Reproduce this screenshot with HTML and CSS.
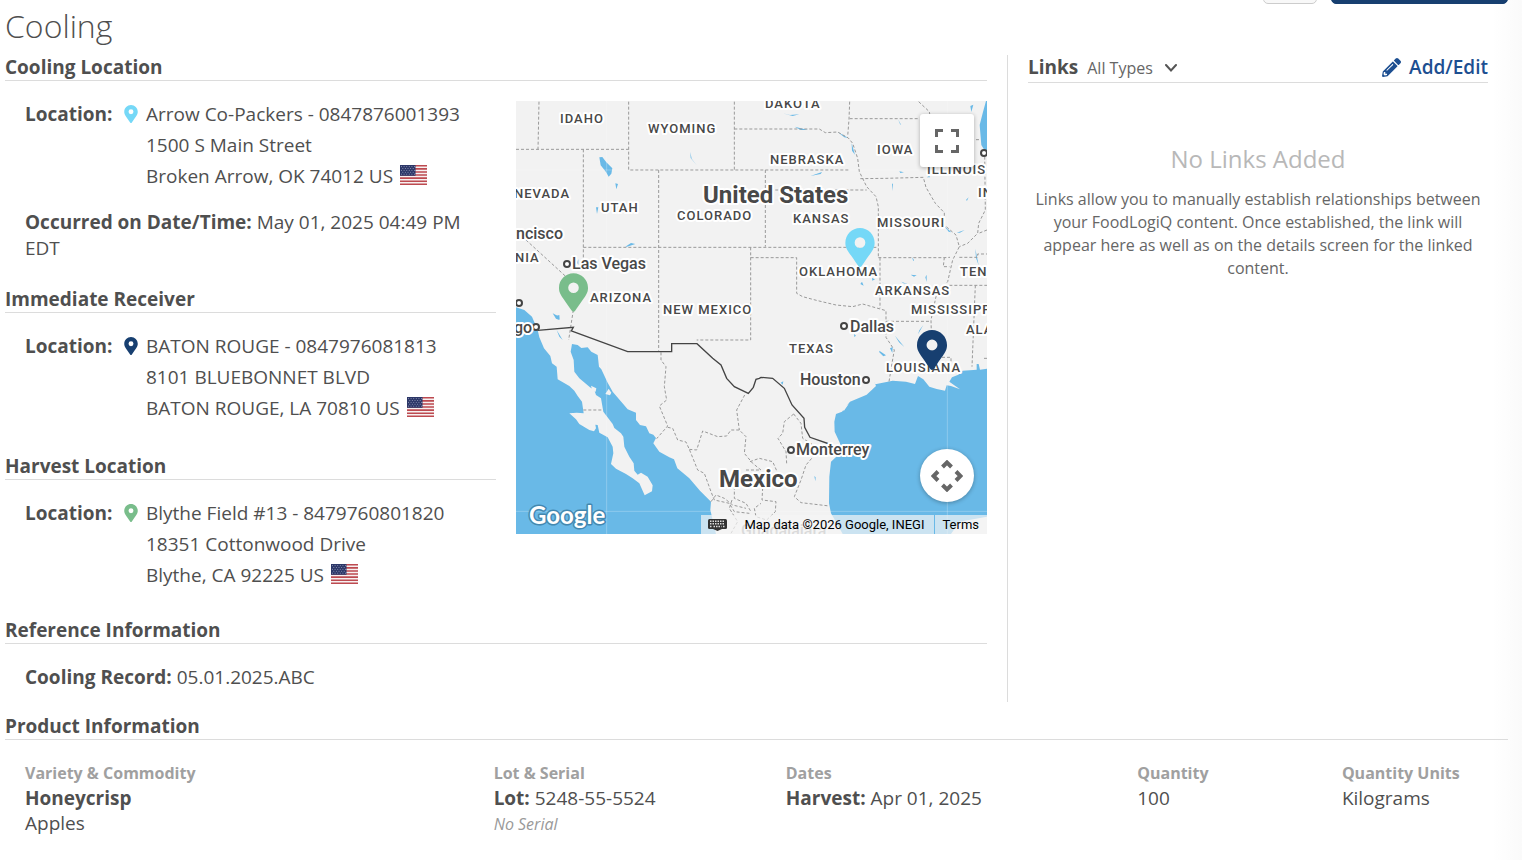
FILE: index.html
```html
<!DOCTYPE html>
<html lang="en">
<head>
<meta charset="utf-8">
<meta name="viewport" content="width=device-width, initial-scale=1">
<title>Cooling</title>
<link rel="stylesheet" href="styles.css">
</head>
<body>
<svg class="defs" aria-hidden="true">
  <symbol id="pin" viewBox="0 0 384 512"><path fill-rule="evenodd" d="M172.3 501.7C27 291 0 269.4 0 192 0 86 86 0 192 0s192 86 192 192c0 77.400-27 99-172.300 309.700-9.500 13.700-29.900 13.700-39.400 0zM192 262a70 70 0 1 0 0-140 70 70 0 0 0 0 140z"/></symbol>
  <symbol id="flag" viewBox="0 0 27 20">
    <rect width="27" height="20" fill="#f7f0f0"/>
    <path stroke="#bd4a50" stroke-width="1.600" d="M0 .8h27M0 3.900h27M0 7h27M0 10h27M0 13.100h27M0 16.200h27M0 19.200h27"/>
    <rect width="15.500" height="10.800" fill="#2c3768"/>
    <path stroke="#8d94b4" stroke-width=".9" stroke-dasharray="1 1.600" d="M1 1.600h14M2.300 3.500h12M1 5.400h14M2.300 7.300h12M1 9.200h14"/>
  </symbol>
</svg>

<div class="toolbar">
  <button class="btn" type="button" aria-label="More actions"></button>
  <button class="btn btn-primary" type="button" aria-label="Edit event"></button>
</div>

<main class="page">
  <h1 class="title">Cooling</h1>
  <div class="columns">
    <div class="details">
      <h2 class="heading">Cooling Location</h2>
      <div class="split">
        <div class="places">
          <section class="block">
            <div class="place">
              <strong class="label">Location:</strong>
              <svg class="pin sky"><use href="#pin"/></svg>
              <address class="address">Arrow Co-Packers - 0847876001393<br>1500 S Main Street<br>Broken Arrow, OK 74012 US <svg class="flag" role="img" aria-label="United States"><use href="#flag"/></svg></address>
            </div>
            <p class="occurred"><strong>Occurred on Date/Time:</strong> May 01, 2025 04:49 PM EDT</p>
          </section>
          <h2 class="heading">Immediate Receiver</h2>
          <section class="block">
            <div class="place">
              <strong class="label">Location:</strong>
              <svg class="pin navy"><use href="#pin"/></svg>
              <address class="address">BATON ROUGE - 0847976081813<br>8101 BLUEBONNET BLVD<br>BATON ROUGE, LA 70810 US <svg class="flag" role="img" aria-label="United States"><use href="#flag"/></svg></address>
            </div>
          </section>
          <h2 class="heading">Harvest Location</h2>
          <section class="block">
            <div class="place">
              <strong class="label">Location:</strong>
              <svg class="pin green"><use href="#pin"/></svg>
              <address class="address">Blythe Field #13 - 8479760801820<br>18351 Cottonwood Drive<br>Blythe, CA 92225 US <svg class="flag" role="img" aria-label="United States"><use href="#flag"/></svg></address>
            </div>
          </section>
        </div>
        <div class="map">
          <svg class="map-canvas" viewBox="0 0 471 433" preserveAspectRatio="xMidYMid slice">
            <g transform="translate(0 -1) scale(.33333)">
              <g class="water">
                <path d="M0 622 25 630 48 650 65 690 70 712 84 745 103 768 108 790 122 800 125 838 160 858 175 872 185 888 198 905 203 940 182 938 160 940 180 958 190 972 220 990 234 994 240 985 238 974 245 975 250 998 275 1012 290 1040 292 1060 285 1092 300 1106 330 1122 350 1135 370 1150 386 1186 408 1174 410 1156 395 1130 375 1118 365 1124 355 1112 353 1090 340 1070 325 1040 322 1010 315 1000 295 984 290 972 262 935 255 895 240 885 235 870 222 862 190 835 175 815 173 780 164 755 168 732 185 735 196 744 215 742 226 755 245 765 249 800 256 808 275 848 290 875 335 928 360 938 360 960 372 975 390 979 400 1000 412 1004 420 1014 412 1030 430 1055 460 1072 474 1078 484 1105 520 1135 552 1172 585 1205 583 1230 600 1302H0z"/>
                <path d="M1413 806 1392 809 1388 792 1382 792 1382 809 1340 812 1327 824 1308 832 1300 845 1332 868 1305 858 1292 856 1287 872 1262 867 1240 860 1222 838 1206 828 1197 852 1170 845 1130 842 1078 853 1071 838 1080 858 1052 884 1002 905 978 935 960 942 955 965 956 995 972 1030 972 1060 945 1085 940 1130 939 1210 945 1240 968 1280 980 1302H1305L1330 1265 1413 1250z"/>
                <path d="M1410 3 1400 40 1391 75 1396 135 1405 150 1413 150V3zM250 172l9-1 12 16 18 18-3 16-8 9-8-14-16-20zM298 250l8 2-5 16zM240 322l7 0-4 20zM328 440l17-11 13 3-25 8zM523 156l4 20 15 20-18-22zM800 40l22 5 28-2-20 5zM836 80l40 10-22 0zM965 96l32 18-12-2zM1007 130l10 34-9-12zM883 228l35-12-4 6zM1146 58l10 18-4-4zM1363 18l9-4-6 22zM1128 250l3 3-2 20zM1282 375l24 22-8-2zM1322 398l24-8-14 8zM1378 446l10 50-8-22zM1150 214l14 3-11 2zM1350 300l8-8-5 10zM1038 545l5 12-10-5zM1068 534l9 4-8 4zM1188 472l6 8-2 4zM1184 524l18 2-8 4zM1232 524l0 22-4-14zM1156 545l20 8-14-3zM1232 232l8-4 2 4zM110 640l20 10 0 10-10-4zM118 648l12-3 1 13zM122 690l18 30-10-10zM1090 752l20 14-8 3-12-12zM1122 745l8-4-1 18zM1137 707l28 34-16-14zM1222 675l-16 28 4-12zM1014 702l6 5-5 4zM895 1128l4 4-1 12zM794 848l8-4-2 10zM182 488l5-10 0 16z"/>
              </g>
              <path class="island" d="M225 857l16 8-2 10-10-3zM278 866l8 12-4 8-14-4zM976 928l22-16-14 20z"/>
              <path class="tiles" d="M272 3V1302M1294 3V1302M0 210H1413M0 1234H1413"/>
              <path class="state" d="M0 148H338M69 5 66 148M338 5V210H1000M655 5V210M655 87H910L928 98 965 96 997 114 1010 130 1025 175 1030 215 1052 260 1080 290 1087 320V473M202 148V480M202 442H1084M428 210V752M656 87M748 210V440M748 270H1052M704 442V720H542M704 473H842V580L860 590 905 602 960 615 1010 620 1040 612 1110 632V712L1135 750 1128 790 1119 845M1087 473H1285L1302 472M1092 473V625M1110 664H1240M1001 5 999 58 995 110M1001 56H1210M1033 236 1110 235 1222 232 1230 262 1258 310 1285 338 1285 375 1320 405 1330 440 1310 480 1295 545 1260 590 1245 660 1248 772M1208 5 1240 35 1244 60M1230 119H1391M1406 155 1408 330 1388 370 1385 400 1355 430 1330 440M1413 390 1388 400M1330 472H1385V462H1413M1285 472 1282 500 1300 500M1285 556H1413M1378 556 1368 800M1248 772H1305V790M1404 775H1413M30 420 150 530M172 630 158 720M202 930H262M435 757 435 780 450 800 445 860 452 900 430 918 455 978 422 1016M455 982 470 985 485 1020 510 1026 520 1048 545 1110 565 1120 585 1175 595 1200 640 1210 655 1235 700 1240M520 1048 542 1050 560 993 605 1010 632 1008 645 990 670 990 690 1010 685 1060 710 1090 735 1110H690M686 885 662 930 670 990M833 942 805 965 800 1000 786 1015 810 1055 812 1090M833 942 855 970 860 1015 892 1035 900 1060 870 1095 855 1140 835 1190 855 1208 940 1218M702 1085 730 1075 770 1085 790 1130 740 1165 738 1200 780 1205 778 1235 752 1260 720 1250 715 1225 735 1210M655 1160V1195L690 1210 705 1235M648 1200 640 1225 665 1265 645 1300M585 1205 600 1185 625 1195 650 1215 690 1225"/>
              <path class="country" d="M65 691 172 682 166 693 335 755H467V731H543L590 775 615 795 632 835 655 860 697 880 712 862 720 838 730 835 735 832 770 835 805 865 828 915 864 955 866 982 882 1012 940 1032"/>
            </g>
            <g class="cities">
              <circle cx="51" cy="163" r="3"/><circle cx="3" cy="202" r="3"/><circle cx="20" cy="226" r="3"/><circle cx="328" cy="225" r="3"/><circle cx="350" cy="279" r="3"/><circle cx="275" cy="349" r="3"/><circle cx="468" cy="52" r="3"/>
            </g>
            <g class="state-names">
              <text x="44" y="22">IDAHO</text><text x="132" y="32">WYOMING</text><text x="249" y="7">DAKOTA</text><text x="254" y="63">NEBRASKA</text><text x="361" y="53">IOWA</text><text x="411" y="73">ILLINOIS</text><text x="-2" y="97">NEVADA</text><text x="85" y="111">UTAH</text><text x="161" y="119">COLORADO</text><text x="277" y="122">KANSAS</text><text x="361" y="126">MISSOURI</text><text x="462" y="96">INDIANA</text><text x="-1" y="161">NIA</text><text x="74" y="201">ARIZONA</text><text x="147" y="213">NEW MEXICO</text><text x="283" y="175">OKLAHOMA</text><text x="359" y="194">ARKANSAS</text><text x="444" y="175">TENNESSEE</text><text x="395" y="213">MISSISSIPPI</text><text x="450" y="233">ALABAMA</text><text x="273" y="252">TEXAS</text><text x="370" y="271">LOUISIANA</text>
            </g>
            <g class="city-names">
              <text x="0" y="138">ncisco</text><text x="56" y="168">Las Vegas</text><text x="-2" y="232">go</text><text x="334" y="231">Dallas</text><text x="284" y="284">Houston</text><text x="280" y="354">Monterrey</text><text class="muted" x="225" y="435">Guadalajara</text>
            </g>
            <g class="country-names"><text x="187" y="102">United States</text><text x="203" y="386">Mexico</text></g>
            <text class="google" x="13" y="423">Google</text>
            <g class="markers">
              <circle cx="57" cy="187" r="5"/><circle cx="344" cy="142" r="5"/><circle cx="416" cy="244" r="5"/>
              <use class="green" href="#pin" x="43" y="172" width="29" height="39"/>
              <use class="sky" href="#pin" x="329" y="127" width="30" height="39"/>
              <use class="navy" href="#pin" x="401" y="229" width="30" height="40"/>
            </g>
          </svg>
          <button class="map-btn fullscreen" type="button" aria-label="Toggle fullscreen view"><svg viewBox="0 0 24 24" width="24" height="24"><path d="M0 0h8v3H3v5H0zM16 0h8v8h-3V3h-5zM0 16h3v5h5v3H0zM21 16h3v8h-8v-3h5z"/></svg></button>
          <button class="map-btn camera" type="button" aria-label="Map camera controls"><svg viewBox="0 0 32 32" width="32" height="32"><path class="arrows" d="M11.500 7 16 2.500 20.500 7M11.500 25l4.500 4.500 4.500-4.500M7 11.500 2.500 16 7 20.500M25 11.500l4.500 4.500-4.500 4.500"/></svg></button>
          <div class="credits">
            <button class="keys" type="button" aria-label="Keyboard shortcuts"><svg viewBox="0 0 19 12" width="19" height="12"><rect width="19" height="10" rx="1.500"/><path d="M5 10h9l-4.500 2z"/><path class="keycaps" d="M2 2.300h15M2 4.800h15M2 7.500h2M5.500 7.500h8M15 7.500h2"/></svg></button>
            <span class="credit">Map data ©2026 Google, INEGI</span>
            <a class="credit terms" href="#">Terms</a>
          </div>
        </div>
      </div>
      <h2 class="heading">Reference Information</h2>
      <p class="record"><strong>Cooling Record:</strong> 05.01.2025.ABC</p>
    </div>

    <aside class="links">
      <div class="links-head">
        <h2 class="links-title"><label for="types">Links</label></h2>
        <span class="picker">
          <select id="types" class="types"><option>All Types</option></select>
          <svg class="chevron" viewBox="0 0 12 8" width="12" height="8"><path d="M1 1l5 5.500L11 1"/></svg>
        </span>
        <a class="edit" href="#"><svg viewBox="0 0 512 512" width="19" height="19"><path d="M497.900 142.100l-46.100 46.100c-4.700 4.700-12.300 4.700-17 0l-111-111c-4.700-4.700-4.700-12.300 0-17l46.100-46.100c18.700-18.700 49.100-18.700 67.900 0l60.100 60.100c18.800 18.700 18.800 49.100 0 67.900zM284.200 99.800L21.600 362.400.4 483.900c-2.900 16.400 11.400 30.600 27.800 27.800l121.500-21.300 262.600-262.600c4.700-4.700 4.700-12.300 0-17l-111-111c-4.800-4.700-12.400-4.700-17.100 0zM124.100 339.900c-5.500-5.500-5.500-14.300 0-19.800l154-154c5.500-5.500 14.300-5.500 19.800 0s5.500 14.300 0 19.800l-154 154c-5.500 5.500-14.300 5.500-19.800 0zM88 424h48v36.300l-64.500 11.300-31.100-31.100L51.700 376H88v48z"/></svg>Add/Edit</a>
      </div>
      <h3 class="empty-title">No Links Added</h3>
      <p class="empty-text">Links allow you to manually establish relationships between your FoodLogiQ content. Once established, the link will appear here as well as on the details screen for the linked content.</p>
    </aside>
  </div>

  <h2 class="heading">Product Information</h2>
  <div class="product">
    <table class="items">
      <colgroup><col class="c-variety"><col class="c-lot"><col class="c-dates"><col class="c-qty"><col></colgroup>
      <thead><tr><th>Variety &amp; Commodity</th><th>Lot &amp; Serial</th><th>Dates</th><th>Quantity</th><th>Quantity Units</th></tr></thead>
      <tbody><tr>
        <td><strong>Honeycrisp</strong><br>Apples</td>
        <td><strong>Lot:</strong> 5248-55-5524<br><em class="none">No Serial</em></td>
        <td><strong>Harvest:</strong> Apr 01, 2025</td>
        <td>100</td>
        <td>Kilograms</td>
      </tr></tbody>
    </table>
  </div>
</main>
</body>
</html>
```
FILE: styles.css
```css
* { box-sizing: border-box; }
body {
  margin: 0;
  min-height: 100vh;
  padding: 0 14px 0 5px;
  background: linear-gradient(to left, #fafafa, #fff 30px);
  color: #4f4f4f;
  font: 19px/25px "Open Sans", sans-serif;
}
h1, h2, h3, p { margin: 0; }
strong { font-size: 18px; font-weight: 700; }
.defs { position: absolute; width: 0; height: 0; }

.toolbar {
  display: flex;
  justify-content: flex-end;
  align-items: flex-end;
  gap: 14px;
  height: 4px;
  overflow: hidden;
}
.btn {
  flex: none;
  width: 54px;
  height: 36px;
  border: 1px solid #ccc;
  border-radius: 5px;
  background: #f8f8f8;
}
.btn-primary { width: 177px; border-color: #173f70; background: #173f70; }

.title { padding-bottom: 7px; font-size: 32px; line-height: 44px; font-weight: 300; }
.heading {
  padding-bottom: 1px;
  border-bottom: 1px solid #dcdcdc;
  font-size: 19px;
  line-height: 24px;
  font-weight: 700;
}

.columns { display: grid; grid-template-columns: 2fr 1fr; margin-bottom: 12px; }
.details { padding-right: 20px; }
.split { display: grid; grid-template-columns: 1fr 1fr; }
.block { padding: 18px 20px 26px; }
.block:last-child { padding-bottom: 23px; }
.place { display: flex; margin-bottom: 4px; }
.label { flex: none; width: 99px; line-height: 31px; }
.pin { flex: none; width: 14px; height: 18px; margin: 6px 8px 0 0; }
.sky { fill: #75d8f7; }
.navy { fill: #173f70; }
.green { fill: #79bd8b; }
.address { font-style: normal; line-height: 31px; white-space: nowrap; }
.flag { width: 27px; height: 20px; margin-left: 2px; vertical-align: -2px; }
.occurred { padding-top: 13px; line-height: 26px; }
.record { padding: 21px 20px 12px; }
.place strong, .occurred strong, .record strong, .items strong { font-size: 19px; }

.map {
  position: relative;
  height: 433px;
  margin: 20px 0 0 20px;
  overflow: hidden;
  background: #f2f2f2;
  font-family: Roboto, sans-serif;
}
.map-canvas { display: block; width: 100%; height: 100%; }
.water { fill: #69b9e7; }
.island { fill: #f2f2f2; }
.tiles { fill: none; stroke: #fff; stroke-opacity: .25; stroke-width: 3; }
.state { fill: none; stroke: #999; stroke-width: 3; stroke-dasharray: 9 6; }
.country { fill: none; stroke: #444; stroke-width: 4; }
.cities { fill: #fff; stroke: #444; stroke-width: 2; }
.map text { fill: #484848; stroke: #fff; stroke-width: 4px; stroke-linejoin: round; paint-order: stroke; font-weight: 500; }
.state-names { font-size: 13px; letter-spacing: 1px; }
.city-names { font-size: 16px; }
.country-names text { font-size: 24px; font-weight: 700; }
.map .muted { opacity: .5; }
.map .google { fill: #fff; stroke: #4388b0; stroke-width: 3px; font-family: Lato, sans-serif; font-size: 24px; font-weight: 700; }
.markers circle { fill: #f2f2f2; }

.map-btn {
  position: absolute;
  right: 13px;
  display: grid;
  place-items: center;
  width: 54px;
  height: 53px;
  padding: 0;
  border: 0;
  background: #fff;
  fill: #666;
  box-shadow: 0 1px 4px rgba(0, 0, 0, .3);
}
.fullscreen { top: 13px; border-radius: 3px; }
.camera { bottom: 32px; border-radius: 50%; }
.arrows { fill: none; stroke: #666; stroke-width: 4; }
.credits {
  position: absolute;
  right: 0;
  bottom: 0;
  display: flex;
  height: 19px;
  color: #000;
  font-size: 13px;
  line-height: 19px;
}
.keys, .credit { background: rgba(245, 245, 245, .7); }
.keys { padding: 0 8px 0 7px; border: 0; }
.keys svg { display: block; fill: #333; }
.keys .keycaps { fill: none; stroke: #ddd; stroke-width: 1.5; stroke-dasharray: 1.5 1; }
.credit { padding: 0 10px 0 9px; white-space: nowrap; }
.terms { margin-left: 1px; padding: 0 8px 0 7px; color: #000; text-decoration: none; }

.links { padding: 0 20px; border-left: 1px solid #dcdcdc; }
.links-head { display: flex; align-items: center; height: 28px; padding-bottom: 2px; border-bottom: 1px solid #dcdcdc; }
.links-title { font-size: 19px; font-weight: 700; }
.picker { position: relative; display: flex; margin-left: 9px; }
.types {
  appearance: none;
  width: 92px;
  padding: 0;
  border: 0;
  background: none;
  color: #666;
  font: 16px/24px "Open Sans", sans-serif;
}
.chevron { position: absolute; top: 8px; right: 2px; fill: none; stroke: #555; stroke-width: 2; stroke-linecap: round; pointer-events: none; }
.edit { display: flex; align-items: center; gap: 8px; margin-left: auto; color: #1d4f91; fill: #1d4f91; font-weight: 600; text-decoration: none; }
.empty-title { margin: 59px 0 13px; color: #b8b8b8; font-size: 24px; line-height: 33px; font-weight: 400; text-align: center; }
.empty-text { color: #666; font-size: 16px; line-height: 23px; text-align: center; }

.product { padding: 21px 0 20px 20px; }
.items { width: 100%; border-collapse: collapse; table-layout: fixed; }
.items th, .items td { padding: 0; text-align: left; vertical-align: top; }
.items th { color: #a0a0a0; font-size: 16px; font-weight: 700; }
.c-variety { width: 31.6%; }
.c-lot { width: 19.7%; }
.c-dates { width: 23.7%; }
.c-qty { width: 13.8%; }
.none { color: #999; font-size: 16px; }
```
